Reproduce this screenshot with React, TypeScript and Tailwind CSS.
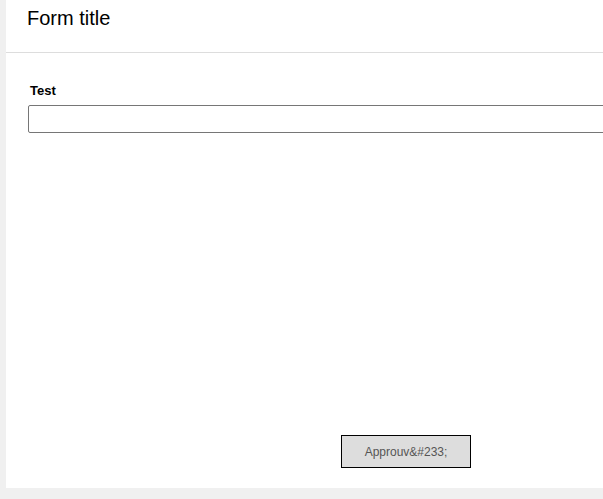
export default function App() {
  return (
    <div
      className="h-[499px] w-full overflow-hidden bg-[#f0f0f0] pl-[6px]"
      style={{ fontFamily: '"Liberation Sans", Arial, sans-serif' }}
    >
      <div className="flex h-[488px] w-[800px] flex-col bg-white">
        {/* Header */}
        <div className="h-[53px] border-b border-[#dddddd] px-[21px] pt-[7px]">
          <div className="text-[20px] leading-[23px] text-black">Form title</div>
        </div>

        {/* Fields */}
        <div className="px-[22px] pt-[30px]">
          <label className="ml-[2px] block text-[13px] font-bold leading-[15px] text-black">
            Test
          </label>
          <input
            type="text"
            className="mt-[7px] block h-[28px] w-[756px] rounded-[2px] border border-[#767676] bg-white px-2 text-[13px] outline-none"
          />
        </div>

        {/* Footer */}
        <div className="mt-auto flex justify-center pb-[20px]">
          <button className="h-[33px] w-[130px] border border-black bg-[#dddddd] text-[12px] text-[#555555]">
            Approuv&amp;#233;
          </button>
        </div>
      </div>
    </div>
  );
}
